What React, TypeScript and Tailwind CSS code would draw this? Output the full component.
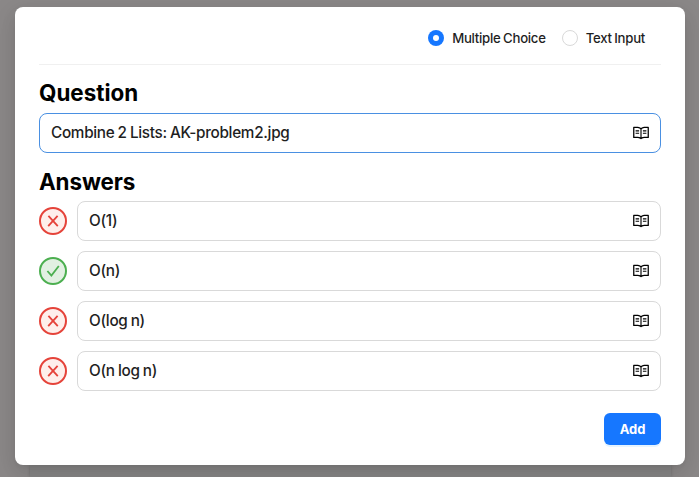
import { useState } from "react";
import { AiOutlineRead } from "react-icons/ai";

type Answer = { text: string; correct: boolean };

const initialAnswers: Answer[] = [
  { text: "O(1)", correct: false },
  { text: "O(n)", correct: true },
  { text: "O(log n)", correct: false },
  { text: "O(n log n)", correct: false },
];

function Radio({ label, checked, onSelect }: { label: string; checked: boolean; onSelect: () => void }) {
  return (
    <button type="button" role="radio" aria-checked={checked} onClick={onSelect} className="flex items-center gap-2">
      <span
        className={
          checked
            ? "flex size-4 items-center justify-center rounded-full bg-[#1677ff]"
            : "size-4 rounded-full border border-[#d9d9d9] bg-white"
        }
      >
        {checked && <span className="size-1.5 rounded-full bg-white" />}
      </span>
      <span className="text-[13.2px] leading-[22px] font-[450] tracking-[-0.28px] [word-spacing:-0.6px] whitespace-nowrap">
        {label}
      </span>
    </button>
  );
}

function Field({ value, focused }: { value: string; focused?: boolean }) {
  return (
    <div
      className={`flex h-10 min-w-0 flex-1 items-center justify-between rounded-lg border bg-white pr-[10px] pl-[11px] ${
        focused ? "border-[#4a90e2]" : "border-[#d9d9d9]"
      }`}
    >
      <span className="text-[15.3px] leading-6 font-[450] tracking-[-0.3px] [word-spacing:-0.6px] whitespace-nowrap">
        {value}
      </span>
      <AiOutlineRead className="size-[18px] shrink-0 stroke-0 text-black" />
    </div>
  );
}

function Mark({ correct }: { correct: boolean }) {
  return (
    <svg viewBox="0 0 24 24" className="size-6 shrink-0 fill-none stroke-current stroke-[1.8]">
      {correct ? <path d="M6.4 12 10.4 16.6 17.8 7" /> : <path d="M7.4 6.8 16.8 17.2M16.6 6.8 7.2 17.2" />}
    </svg>
  );
}

export default function App() {
  const [mode, setMode] = useState("choice");
  const [answers, setAnswers] = useState(initialAnswers);
  const toggle = (index: number) =>
    setAnswers(answers.map((a, i) => (i === index ? { ...a, correct: !a.correct } : a)));

  return (
    <div className="flex h-[477px] w-[699px] flex-col bg-[#8b8888] font-['Inter',sans-serif] text-[#1f1f1f]">
      <main className="z-10 mt-[7px] mr-[14px] ml-[15px] flex h-[458px] shrink-0 flex-col rounded-lg bg-white px-6 shadow-[0_6px_16px_rgba(0,0,0,0.08),0_3px_6px_-4px_rgba(0,0,0,0.12),0_9px_28px_8px_rgba(0,0,0,0.05)]">
        <div role="radiogroup" className="flex h-[58px] items-center justify-end gap-4 border-b border-[#f0f0f0] pt-1 pr-4">
          <Radio label="Multiple Choice" checked={mode === "choice"} onSelect={() => setMode("choice")} />
          <Radio label="Text Input" checked={mode === "text"} onSelect={() => setMode("text")} />
        </div>
        <h2 className="mt-[13px] h-[35px] text-[22.4px] leading-[30px] font-[750] text-black">Question</h2>
        <div className="flex">
          <Field value="Combine 2 Lists: AK-problem2.jpg" focused />
        </div>
        <h2 className="mt-[14px] h-[34px] text-[22.4px] leading-[30px] font-[750] tracking-[-0.1px] text-black">Answers</h2>
        <div className="flex flex-col gap-2.5">
          {answers.map((answer, i) => (
            <div key={answer.text} className="flex items-center gap-2.5">
              <button
                type="button"
                aria-label={answer.correct ? "Correct" : "Incorrect"}
                onClick={() => toggle(i)}
                className={`flex size-7 items-center justify-center rounded-full border-2 ${
                  answer.correct
                    ? "border-[#4caf50] bg-[#e2f0e2] text-[#4caf50]"
                    : "border-[#e5433a] bg-[#feefeb] text-[#e5433a]"
                }`}
              >
                <Mark correct={answer.correct} />
              </button>
              <Field value={answer.text} />
            </div>
          ))}
        </div>
        <button
          type="button"
          className="mt-[22px] flex h-8 w-[57px] items-center justify-center self-end rounded-md bg-[#1677ff] pt-px text-[13px] font-bold tracking-[-0.1px] text-white shadow-[0_2px_0_rgba(5,145,255,0.1)]"
        >
          Add
        </button>
      </main>
      <div className="mr-[28px] ml-[30px] h-3 bg-[#858484] shadow-[0_0_3px_rgba(0,0,0,0.2)]" />
    </div>
  );
}
